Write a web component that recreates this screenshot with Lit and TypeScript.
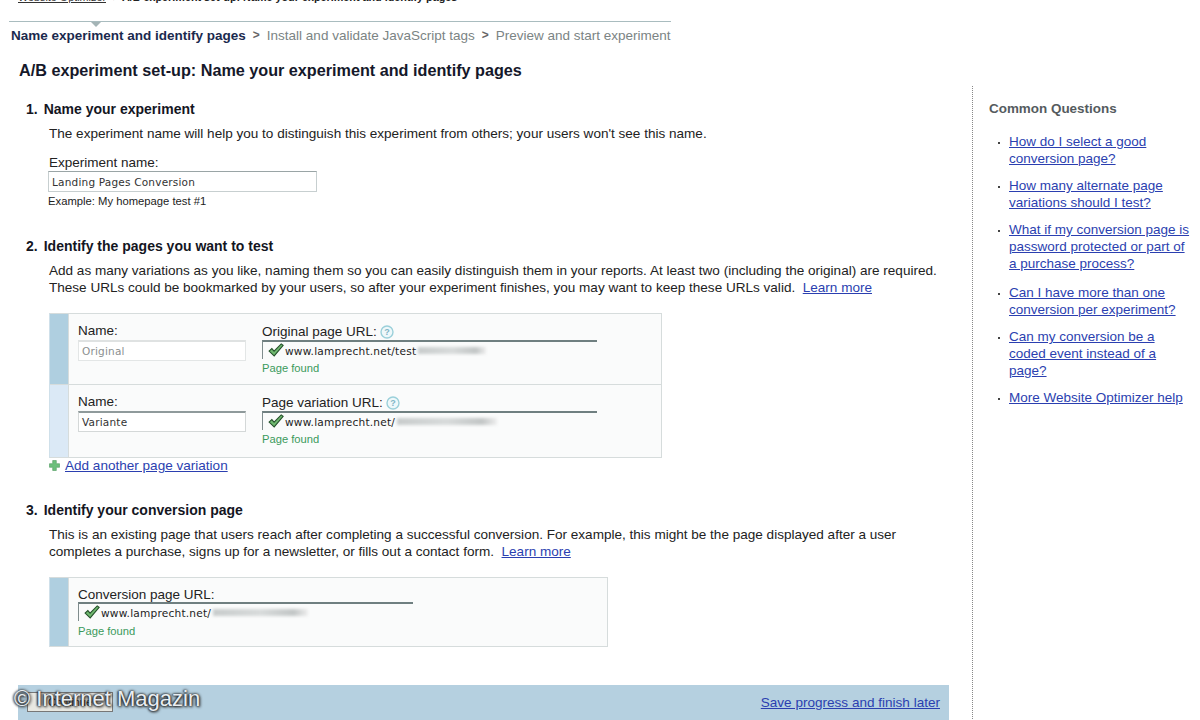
import { LitElement, html, css, svg } from "lit";
import { customElement } from "lit/decorators.js";

const check = svg`<svg class="check" width="16" height="14" viewBox="0 0 15 13"><path d="M1 7.5 L3.6 5.2 L5.7 7.6 L12.4 0.8 L14.2 2.2 L5.8 12 Z" fill="#6fb86f" stroke="#24502a" stroke-width="1"/></svg>`;
const help = svg`<svg class="help" width="14" height="14" viewBox="0 0 14 14"><circle cx="7" cy="7" r="6" fill="#eef8fa" stroke="#9bd0da" stroke-width="1.4"/><text x="7" y="10.2" font-size="9" font-weight="700" text-anchor="middle" fill="#7fb5c6" font-family="Liberation Sans, sans-serif">?</text></svg>`;
const plus = svg`<svg class="plus" width="11" height="11" viewBox="0 0 11 11"><path d="M3.7 0.5h3.6v3.2h3.2v3.6H7.3v3.2H3.7V7.3H0.5V3.7h3.2z" fill="#6cbf7c" stroke="#4f9a60" stroke-width="0.6"/></svg>`;

@customElement("app-root")
export class AppRoot extends LitElement {
  static styles = css`
    :host { display: block; position: relative; width: 1200px; height: 720px; overflow: hidden; background: #fff; color: #1e1e1e; font-family: "Liberation Sans", Arial, sans-serif; font-size: 13.5px; }
    a { color: #2b3fb0; text-decoration: underline; }
    .crumbs { margin: -9px 0 0 18px; height: 30px; font-size: 10.8px; line-height: 13px; font-weight: 700; color: #222; white-space: pre; box-sizing: border-box; }
    .crumbs a { font-weight: 400; color: #333; margin-right: 4px; }
    .rule { position: relative; margin-left: 9px; width: 662px; height: 1px; background: #a9bcbf; }
    .rule::after { content: ""; position: absolute; left: 82px; top: 1px; border: 5px solid transparent; border-top: 5px solid #a4b4b6; border-bottom: 0; }
    .steps { margin: 6px 0 0 11px; height: 15px; line-height: 15px; font-size: 13.5px; color: #7b8484; white-space: nowrap; display: flex; gap: 7px; }
    .steps b { color: #1b2a4e; }
    .steps .sep { font-weight: 700; color: #666; font-size: 12px; }
    h1 { margin: 18px 0 0 19px; font-size: 16.2px; line-height: 19px; font-weight: 700; color: #15182a; }
    .columns { display: grid; grid-template-columns: 973px 1fr; margin-top: 6px; height: 635px; }
    .main { border-right: 1px dotted #888; padding-top: 16px; box-sizing: border-box; }
    .title { margin: 0 0 0 26px; font-size: 14px; line-height: 15px; font-weight: 700; color: #14161f; }
    .title span { margin-right: 6px; }
    .desc { margin: 8px 0 0 49px; font-size: 13.55px; line-height: 17px; color: #222; white-space: nowrap; }
    .field-label { font-size: 13.5px; line-height: 15px; color: #222; }
    .exp { margin: 13px 0 0 49px; }
    .box { box-sizing: border-box; font-family: "DejaVu Sans", sans-serif; font-size: 10.5px; letter-spacing: 0.2px; color: #333; display: flex; align-items: center; padding-left: 3px; background: #fff; }
    .exp .box { margin: 1px 0 0 -1px; width: 269px; height: 21px; border: 1px solid #c7cfd0; border-top-color: #9aa5a6; }
    .example { margin: 3px 0 0 -1px; font-size: 11.25px; line-height: 13px; color: #222; }
    .s2 { margin-top: 31px; }
    .s3 { margin-top: 30px; }
    .table { margin: 17px 0 0 49px; border: 1px solid #d6dcdc; border-left: 1px solid #cfe0ea; background: #fafbfb; display: grid; grid-template-columns: 19px 1fr; box-sizing: border-box; }
    .t2 { width: 613px; }
    .t3 { width: 559px; margin-top: 17px; }
    .bar { background: #dbe9f6; border-right: 1px solid #d6dcdc; }
    .bar.dark { background: #afcfe0; }
    .row { display: grid; grid-template-columns: 184px 1fr; padding: 9px 0 0 9px; height: 70px; box-sizing: border-box; }
    .row + .bar, .row + .bar + .row { border-top: 1px solid #d6dcdc; height: 72px; }
    .row .box { width: 168px; height: 21px; margin-top: 2px; border: 1px solid #e3e6e6; border-top: 2px solid #dfe2e2; }
    .row .box.dim { color: #8b9090; }
    .row .box.on { border-color: #d4d8d8; border-top: 2px solid #8f9a9b; }
    .url { box-sizing: border-box; width: 335px; height: 19px; border-top: 2px solid #6f7f80; border-left: 1px solid #7f8c8d; display: flex; align-items: center; gap: 1px; padding-left: 5px; margin-top: 1px; font-family: "DejaVu Sans", sans-serif; font-size: 10.6px; letter-spacing: 0.2px; color: #222; white-space: nowrap; }
    .label-row { display: flex; align-items: center; gap: 3px; height: 15px; margin-top: 1px; }
    .found { font-size: 11.2px; line-height: 13px; color: #3b9a5b; margin-top: 3px; }
    .check { flex: none; margin-top: -2px; }
    .blur { display: inline-block; height: 7px; background: linear-gradient(90deg, #c8cccc, #d8dbdb 50%, #c2c6c6 85%, #eee); filter: blur(1.5px); margin-left: 1px; }
    .add { display: flex; align-items: center; gap: 5px; margin: -1px 0 0 49px; height: 16px; font-size: 13.55px; }
    .single { padding: 8px 0 0 9px; height: 68px; box-sizing: border-box; }
    .single .url { margin-top: 0; }
    .single .found { margin-top: 4px; }
    .footer { margin: 38px 0 0 18px; width: 931px; height: 40px; background: #b5d0e0; box-sizing: border-box; display: flex; justify-content: space-between; align-items: flex-start; padding: 7px 9px 0 9px; font-size: 13.55px; }
    .footer a { line-height: 20px; margin-top: 1px; }
    .footer button { width: 86px; height: 20px; font: 11px "Liberation Sans", sans-serif; background: #e8e8e2; border: 1px solid #777; color: #111; padding: 0; }
    .side { padding: 15px 0 0 16px; }
    .side h2 { margin: 0; font-size: 13.45px; line-height: 15px; font-weight: 700; color: #555b5e; }
    .side ul { list-style: none; margin: 17px 0 0; padding: 0 0 0 20px; font-size: 13.5px; line-height: 17px; }
    .side li { position: relative; margin-bottom: 10px; white-space: nowrap; }
    .side li:nth-child(3) { margin-bottom: 12px; }
    .side li::before { content: ""; position: absolute; left: -11px; top: 9px; width: 2px; height: 2px; background: #444; }
    .mark { position: absolute; left: 14px; top: 686px; font-size: 22px; line-height: 26px; color: #e9eef2; text-shadow: 0 0 3px #222, 1px 1px 3px #222, -1px 0 2px #333; white-space: nowrap; }
  `;

  private blur(w: number) {
    return html`<span class="blur" style="width:${w}px"></span>`;
  }

  render() {
    const qs = [
      ["How do I select a good", "conversion page?"],
      ["How many alternate page", "variations should I test?"],
      ["What if my conversion page is", "password protected or part of", "a purchase process?"],
      ["Can I have more than one", "conversion per experiment?"],
      ["Can my conversion be a", "coded event instead of a", "page?"],
      ["More Website Optimizer help"],
    ];
    return html`
      <div class="crumbs"><a href="#">Website Optimizer</a> &gt; A/B experiment set-up: Name your experiment and identify pages</div>
      <div class="rule"></div>
      <div class="steps"><b>Name experiment and identify pages</b><span class="sep">&gt;</span><span>Install and validate JavaScript tags</span><span class="sep">&gt;</span><span>Preview and start experiment</span></div>
      <h1>A/B experiment set-up: Name your experiment and identify pages</h1>
      <div class="columns">
        <div class="main">
          <p class="title"><span>1.</span>Name your experiment</p>
          <p class="desc">The experiment name will help you to distinguish this experiment from others; your users won't see this name.</p>
          <div class="exp">
            <div class="field-label">Experiment name:</div>
            <div class="box">Landing Pages Conversion</div>
            <div class="example">Example: My homepage test #1</div>
          </div>

          <p class="title s2"><span>2.</span>Identify the pages you want to test</p>
          <p class="desc">Add as many variations as you like, naming them so you can easily distinguish them in your reports. At least two (including the original) are required.<br>These URLs could be bookmarked by your users, so after your experiment finishes, you may want to keep these URLs valid.&nbsp; <a href="#">Learn more</a></p>
          <div class="table t2">
            <div class="bar dark"></div>
            <div class="row">
              <div><div class="field-label">Name:</div><div class="box dim">Original</div></div>
              <div>
                <div class="label-row field-label">Original page URL: ${help}</div>
                <div class="url">${check}<span>www.lamprecht.net/test</span>${this.blur(68)}</div>
                <div class="found">Page found</div>
              </div>
            </div>
            <div class="bar"></div>
            <div class="row">
              <div><div class="field-label">Name:</div><div class="box on">Variante</div></div>
              <div>
                <div class="label-row field-label">Page variation URL: ${help}</div>
                <div class="url">${check}<span>www.lamprecht.net/</span>${this.blur(100)}</div>
                <div class="found">Page found</div>
              </div>
            </div>
          </div>
          <div class="add">${plus}<a href="#">Add another page variation</a></div>

          <p class="title s3"><span>3.</span>Identify your conversion page</p>
          <p class="desc">This is an existing page that users reach after completing a successful conversion. For example, this might be the page displayed after a user<br>completes a purchase, signs up for a newsletter, or fills out a contact form.&nbsp; <a href="#">Learn more</a></p>
          <div class="table t3">
            <div class="bar dark"></div>
            <div class="single">
              <div class="label-row field-label">Conversion page URL:</div>
              <div class="url">${check}<span>www.lamprecht.net/</span>${this.blur(95)}</div>
              <div class="found">Page found</div>
            </div>
          </div>

          <div class="footer"><button>Continue</button><a href="#">Save progress and finish later</a></div>
        </div>
        <div class="side">
          <h2>Common Questions</h2>
          <ul>
            ${qs.map((q) => html`<li><a href="#">${q.map((l, i) => html`${i ? html`<br>` : ""}${l}`)}</a></li>`)}
          </ul>
        </div>
      </div>
      <div class="mark">© Internet Magazin</div>
    `;
  }
}
